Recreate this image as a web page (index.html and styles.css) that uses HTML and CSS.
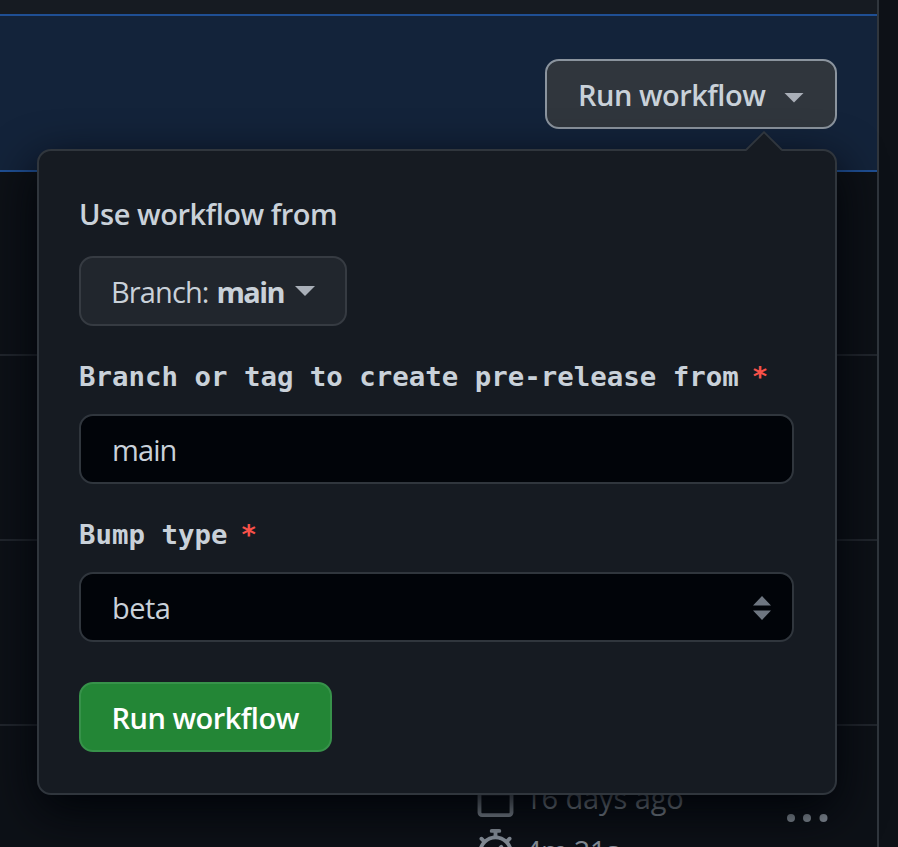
FILE: index.html
```html
<!DOCTYPE html>
<html lang="en">
<head>
<meta charset="utf-8">
<title>Run workflow</title>
<link rel="stylesheet" href="styles.css">
</head>
<body>
<main class="panel">
  <div class="panel-head"></div>
  <div class="banner">
    <div class="dropdown">
      <button class="btn btn-open" type="button"><span class="t-run">Run workflow</span><span class="caret"></span></button>
      <form class="popover">
        <svg class="arrow" width="38" height="20" viewBox="0 0 38 20"><path d="M1 20 L19 2 L37 20Z" fill="#161b22"/><path d="M1 19 L19 1.200 L37 19" fill="none" stroke="#30363d" stroke-width="1.8"/></svg>
        <div class="heading"><span class="t-use">Use workflow from</span></div>
        <button class="btn btn-branch" type="button"><span class="t-branch">Branch:</span><span class="t-main">main</span><span class="caret"></span></button>
        <div class="label">Branch or tag to create pre-release from<span class="star">*</span></div>
        <div class="field"><span class="t-value">main</span></div>
        <div class="label">Bump type<span class="star">*</span></div>
        <div class="field"><span class="t-beta">beta</span>
          <svg class="updown" width="18" height="26" viewBox="0 0 18 26"><path d="M9 1 18 10.5H0ZM0 15.5H18L9 25Z" fill="#6e7681"/></svg>
        </div>
        <button class="btn btn-submit" type="button"><span class="t-run">Run workflow</span></button>
      </form>
    </div>
  </div>
  <div class="row row-first"></div>
  <div class="row"></div>
  <div class="row"></div>
  <div class="row row-last">
    <div class="meta">
      <div class="meta-line">
        <svg width="41" height="41" viewBox="0 0 16 16" fill="currentColor"><path d="M4.75 0a.75.75 0 0 1 .75.75V2h5V.75a.75.75 0 0 1 1.5 0V2h1.25c.966 0 1.75.784 1.75 1.75v10.5A1.75 1.75 0 0 1 13.25 16H2.75A1.75 1.75 0 0 1 1 14.25V3.75C1 2.784 1.784 2 2.75 2H4V.75A.75.75 0 0 1 4.75 0ZM2.5 7.5v6.75c0 .138.112.25.25.25h10.5a.25.25 0 0 0 .25-.25V7.5Z"/></svg>
        <span class="t-meta">16 days ago</span>
      </div>
      <div class="meta-line">
        <svg width="41" height="41" viewBox="0 0 16 16" fill="currentColor"><path d="M5.75.75A.75.75 0 0 1 6.5 0h3a.75.75 0 0 1 0 1.5h-.75v1l-.001.041a6.724 6.724 0 0 1 3.464 1.435l.007-.006.75-.75a.749.749 0 0 1 1.275.326.749.749 0 0 1-.215.734l-.75.75-.006.007a6.75 6.75 0 1 1-10.548 0L2.72 5.03l-.75-.75a.751.751 0 0 1 .018-1.042.751.751 0 0 1 1.042-.018l.75.75.007.006A6.72 6.72 0 0 1 7.25 2.541V1.5H6.5a.75.75 0 0 1-.75-.75ZM8 14.5a5.25 5.25 0 1 0-.001-10.501A5.25 5.25 0 0 0 8 14.5Zm.389-6.7 1.33-1.33a.75.75 0 1 1 1.061 1.06L9.45 8.861A1.503 1.503 0 0 1 8 10.75a1.499 1.499 0 1 1 .389-2.95Z"/></svg>
        <span class="t-meta t-time">4m 21s</span>
      </div>
    </div>
    <svg class="kebab" width="42" height="10" viewBox="0 0 42 10" fill="currentColor"><circle cx="5" cy="5" r="4"/><circle cx="21" cy="5" r="4"/><circle cx="37.500" cy="5" r="4"/></svg>
  </div>
</main>
</body>
</html>
```
FILE: styles.css
```css
* { box-sizing: border-box; }
html, body { height: 100%; }
body {
  margin: 0;
  overflow: hidden;
  background: #0d1117;
  color: #c9d1d9;
  font: 400 29px/40px "Open Sans", "Noto Sans", sans-serif;
}
span { white-space: nowrap; }
.panel {
  width: 879px;
  height: 847px;
  border-right: 2px solid #30363d;
  display: flex;
  flex-direction: column;
}
.panel-head { height: 14px; flex: none; background: #161b22; }
.banner {
  flex: none;
  height: 158px;
  padding: 43px 40px 0 0;
  border-top: 2px solid #1f4f94;
  border-bottom: 2px solid #1f4f94;
  background: #13233a;
  display: flex;
  justify-content: flex-end;
  align-items: flex-start;
}
.dropdown { position: relative; }
.btn {
  height: 70px;
  border: 2px solid;
  border-radius: 14px;
  display: flex;
  align-items: center;
  color: #c9d1d9;
  font: inherit;
  padding: 2px 31px 0;
}
.btn-open {
  width: 292px;
  background: #30363d;
  border-color: #8b949e;
  font-weight: 600;
  justify-content: space-between;
}
.t-run { letter-spacing: -0.5px; }
.caret {
  flex: none;
  width: 20px;
  height: 10px;
  background: #a9afb8;
  clip-path: polygon(0 0, 100% 0, 50% 100%);
}
.btn-open .caret { margin-top: 5px; }
.popover {
  position: absolute;
  top: 90px;
  right: 0;
  width: 800px;
  height: 646px;
  padding: 43px 41px 0 40px;
  background: #161b22;
  border: 2px solid #30363d;
  border-radius: 14px;
  box-shadow: 0 16px 48px #010409;
}
.arrow { position: absolute; top: -20px; right: 52px; }
.heading { height: 62px; font-weight: 600; }
.t-use { letter-spacing: -0.47px; }
.btn-branch {
  width: 268px;
  padding-left: 30px;
  background: #21262d;
  border-color: #363b42;
}
.t-branch { letter-spacing: -0.9px; }
.t-main { font-weight: 700; margin-left: 8px; letter-spacing: -1.6px; }
.t-value { letter-spacing: -0.9px; }
.t-beta { letter-spacing: -0.5px; }
.btn-branch .caret { margin: -2px 0 0 11px; }
.label {
  height: 88px;
  padding-top: 31px;
  font: 700 27.4px/40px "DejaVu Sans Mono", monospace;
  white-space: nowrap;
}
.star { margin-left: 13px; color: #f85149; }
.field {
  height: 70px;
  border: 2px solid #30363d;
  border-radius: 14px;
  background: #010409;
  padding: 2px 21px 0 31px;
  display: flex;
  align-items: center;
  justify-content: space-between;
}
.updown { margin-top: -1px; }
.btn-submit {
  width: 253px;
  margin-top: 40px;
  padding-left: 30.5px;
  background: #238636;
  border-color: #37924a;
  color: #fff;
  font-weight: 600;
}
.row { flex: none; height: 185px; border-top: 2px solid #21262d; }
.row-first { height: 182px; border-top: 0; }
.row-last {
  height: 123px;
  overflow: hidden;
  padding: 50px 49px 0 475px;
  display: flex;
  justify-content: space-between;
  color: #8b949e;
}
.meta-line { height: 53px; display: flex; gap: 9px; }
.t-meta { padding-top: 2px; letter-spacing: -0.1px; }
.t-time { letter-spacing: -0.7px; }
.kebab { margin-top: 37px; }
```
